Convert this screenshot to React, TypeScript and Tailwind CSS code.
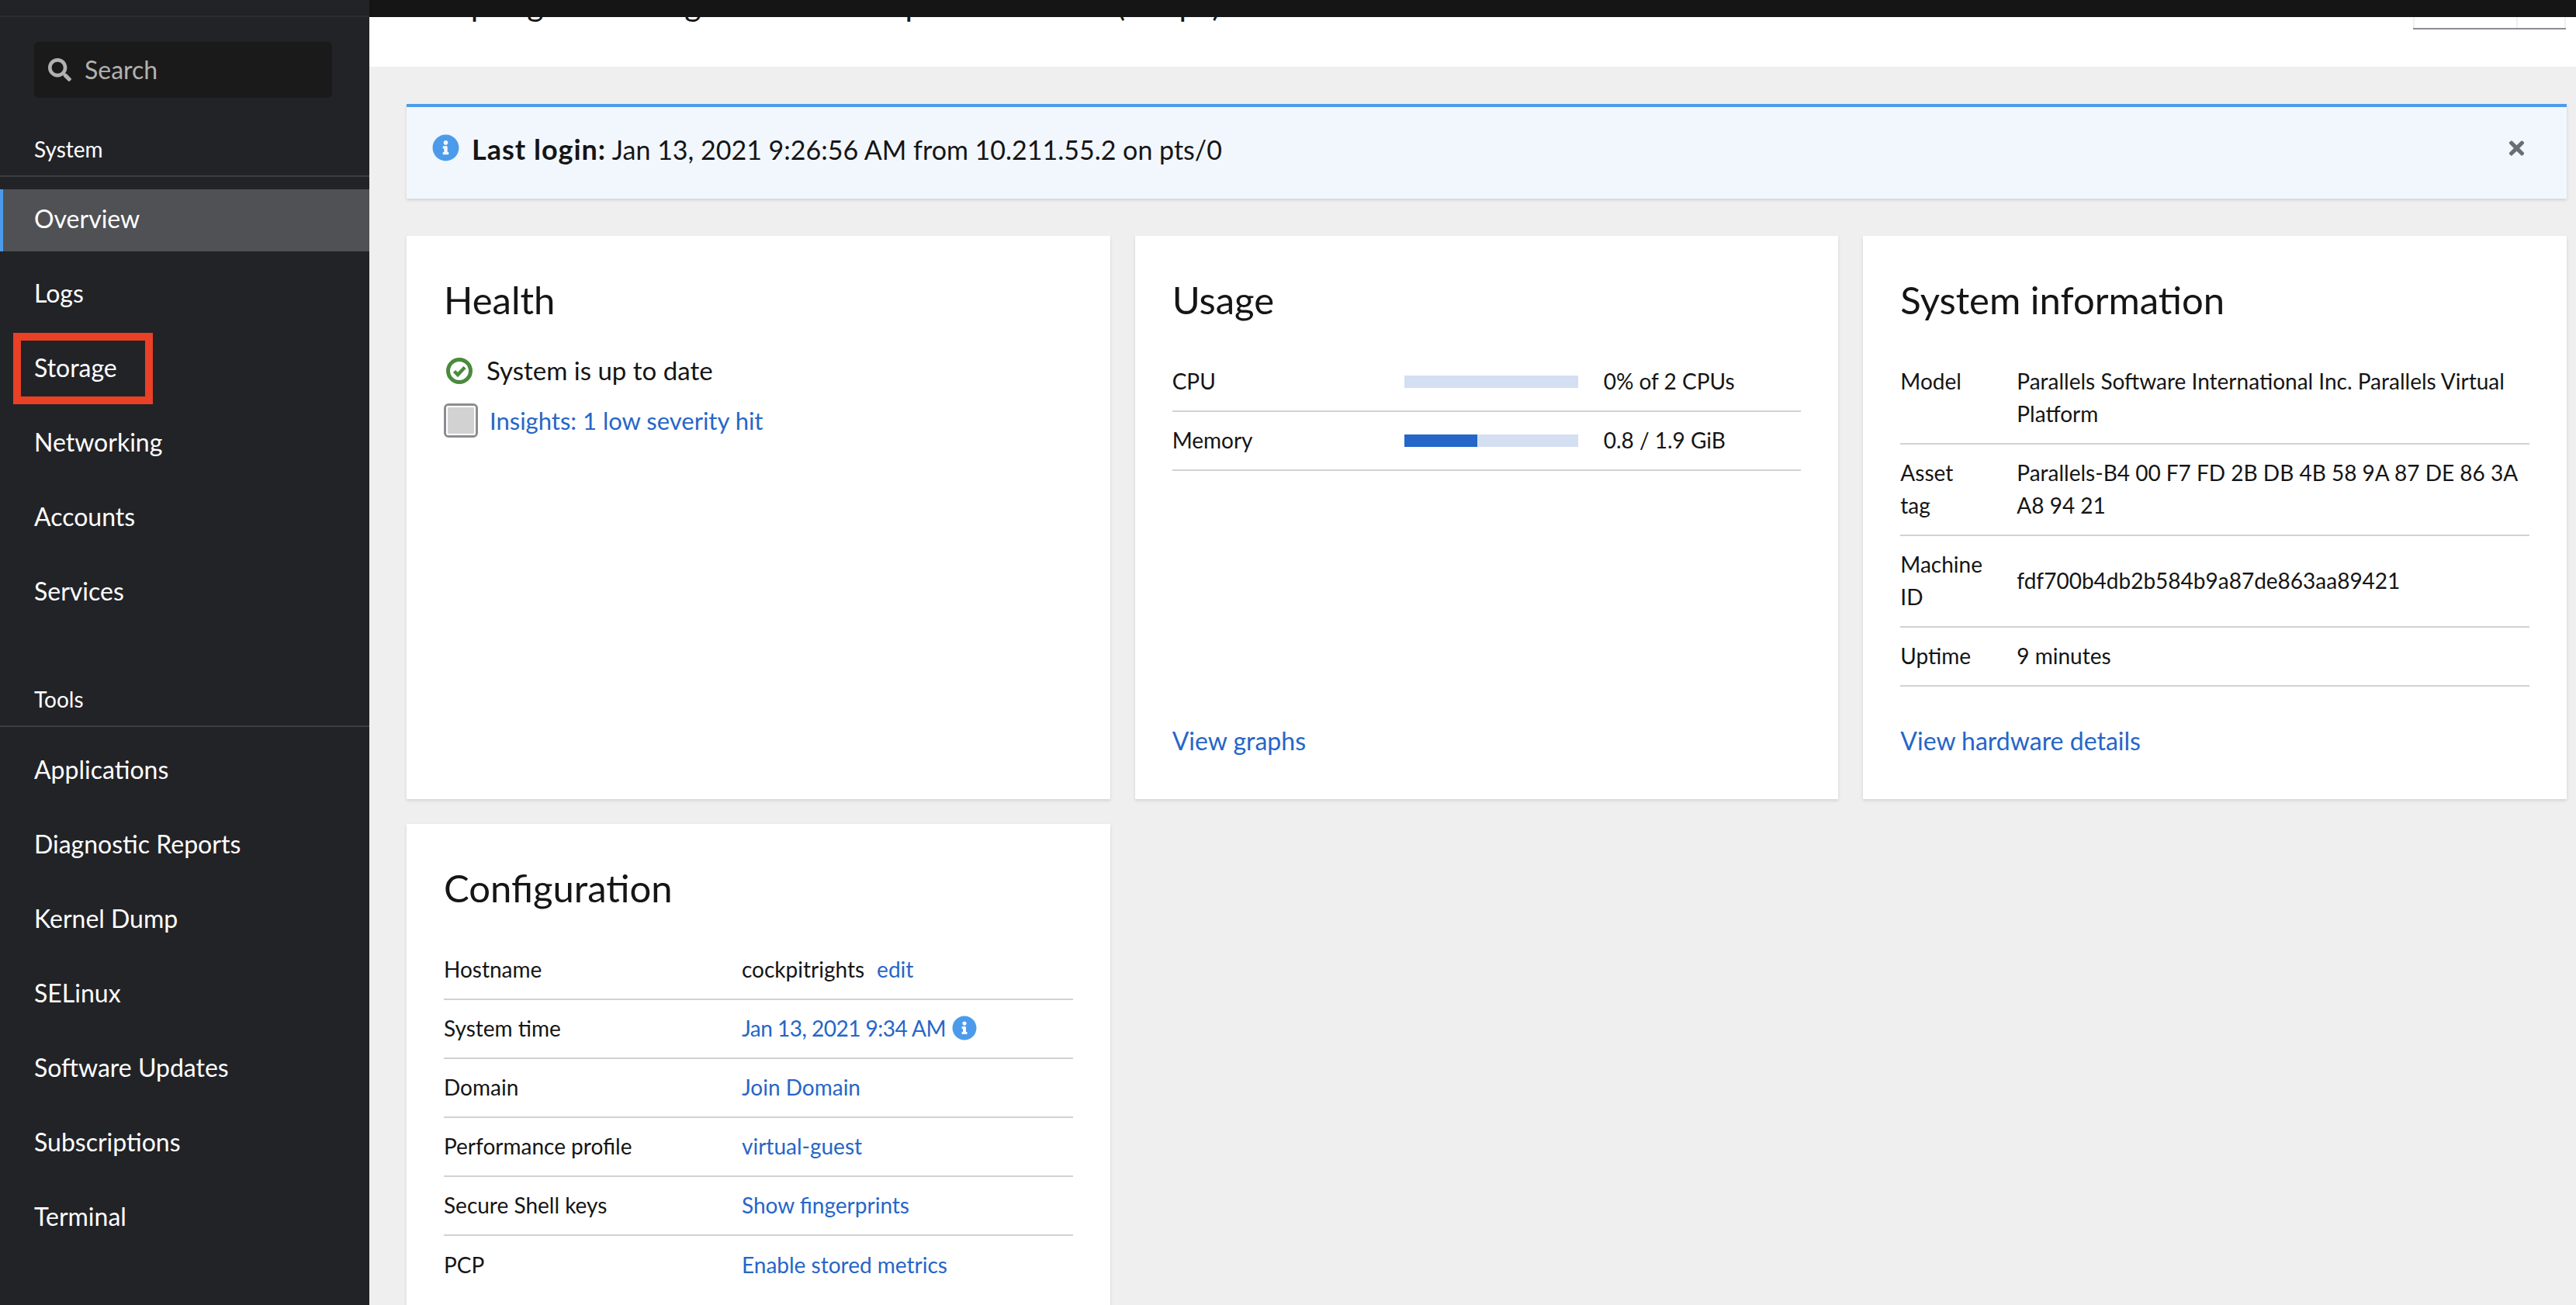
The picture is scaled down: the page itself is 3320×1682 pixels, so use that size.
import { FaInfoCircle, FaSearch, FaTimes } from 'react-icons/fa';

const systemItems = ['Overview', 'Logs', 'Storage', 'Networking', 'Accounts', 'Services'];
const toolItems = ['Applications', 'Diagnostic Reports', 'Kernel Dump', 'SELinux', 'Software Updates', 'Subscriptions', 'Terminal'];

const infoRows = [
    { label: 'Model', value: 'Parallels Software International Inc. Parallels Virtual Platform' },
    { label: 'Asset tag', value: 'Parallels-B4 00 F7 FD 2B DB 4B 58 9A 87 DE 86 3A A8 94 21' },
    { label: 'Machine ID', value: 'fdf700b4db2b584b9a87de863aa89421' },
    { label: 'Uptime', value: '9 minutes' },
];

const configRows = [
    { label: 'System time', value: 'Jan 13, 2021 9:34 AM', info: true },
    { label: 'Domain', value: 'Join Domain' },
    { label: 'Performance profile', value: 'virtual-guest' },
    { label: 'Secure Shell keys', value: 'Show fingerprints' },
    { label: 'PCP', value: 'Enable stored metrics', last: true },
];

function NavItem({ name, active, boxed }: { name: string; active?: boolean; boxed?: boolean }) {
    return (
        <div className={`relative h-[80px] mb-[16px] pb-[4px] flex items-center text-[32px] text-white ${active ? 'bg-[#505155] border-l-4 border-[#4c9beb] pl-[40px]' : 'pl-[44px]'}`}>
            {name}
            {boxed && <div className="absolute left-[17px] top-[-7px] w-[180px] h-[92px] border-[10px] border-[#e94026]" />}
        </div>
    );
}

function SectionLabel({ children }: { children: string }) {
    return <div className="pl-[44px] pb-[13px] border-b-2 border-[#3c3d41] text-[28px] leading-[42px] text-white">{children}</div>;
}

function CheckIcon() {
    return (
        <svg viewBox="0 0 34 34" className="w-[34px] h-[34px] ml-[3px] mr-[18px] shrink-0">
            <circle cx="17" cy="17" r="14.5" fill="none" stroke="#4a8a3c" strokeWidth="5" />
            <path d="M10.5 17.5 L15 22 L24 12.5" fill="none" stroke="#4a8a3c" strokeWidth="4.5" />
        </svg>
    );
}

function Sidebar() {
    return (
        <div className="w-[476px] shrink-0 bg-[#222327] h-full overflow-hidden">
            <div className="h-[22px] border-b-2 border-[#2b2c2e] overflow-hidden pl-[44px]">
                <div className="text-[32px] leading-[42px] text-white mt-[-39px]">cockpitrights</div>
            </div>
            <div className="mx-[44px] mt-[32px] h-[72px] w-[384px] bg-[#1a1a1a] rounded-[6px] flex items-center pl-[18px] text-[32px] text-[#b1b1b1]">
                <FaSearch className="w-[30px] h-[30px] mr-[17px]" />
                Search
            </div>
            <div className="mt-[45px] mb-[16px]">
                <SectionLabel>System</SectionLabel>
            </div>
            {systemItems.map((item) => (
                <NavItem key={item} name={item} active={item === 'Overview'} boxed={item === 'Storage'} />
            ))}
            <div className="mt-[76px] mb-[17px]">
                <SectionLabel>Tools</SectionLabel>
            </div>
            {toolItems.map((item) => (
                <NavItem key={item} name={item} />
            ))}
        </div>
    );
}

function Card({ title, children, className }: { title: string; children: React.ReactNode; className?: string }) {
    return (
        <div className={`bg-white px-[48px] pt-[48px] shadow-[0_2px_4px_rgba(3,3,3,0.12)] flex flex-col ${className ?? ''}`}>
            <h2 className="text-[49px] leading-[68px] mb-[35px] text-[#151515]">{title}</h2>
            {children}
        </div>
    );
}

function UsageRow({ label, value, percent }: { label: string; value: string; percent: number }) {
    return (
        <div className="flex items-center h-[76px] border-b-2 border-[#d2d2d2] text-[28px] text-[#151515]">
            <div className="w-[299px] pb-[2px]">{label}</div>
            <div className="w-[224px] h-[16px] bg-[#d5dff2]">
                <div className="h-full bg-[#2566c8]" style={{ width: `${percent}%` }} />
            </div>
            <div className="ml-[33px] pb-[2px]">{value}</div>
        </div>
    );
}

export default function App() {
    return (
        <div className="flex w-[3320px] h-[1682px] overflow-hidden text-[#151515] font-['Lato','Noto_Sans',sans-serif]">
            <Sidebar />
            <div className="flex-1 min-w-0 flex flex-col bg-[#efefef]">
                <div className="h-[22px] bg-[#151515] relative z-10 shrink-0" />
                <div className="h-[64px] shrink-0 bg-white flex justify-between pl-[48px] pr-[13px] overflow-hidden">
                    <div className="text-[41px] leading-[56px] mt-[-44px]">cockpitrights running Red Hat Enterprise Linux 8.3 (Ootpa)</div>
                    <div className="w-[197px] h-[16px] flex border-b-2 border-[#8a8d90]">
                        <div className="w-[135px] border-x-2 border-[#f0f0f0]" />
                        <div className="flex-1 border-r-2 border-[#f0f0f0]" />
                    </div>
                </div>
                <div className="pl-[48px] pr-[12px] pt-[48px]">
                    <div className="h-[122px] bg-[#f2f7fe] border-t-4 border-[#4c9beb] shadow-[0_2px_4px_rgba(3,3,3,0.12)] flex items-start pl-[33px] pr-[53px] pt-[35px]">
                        <FaInfoCircle className="w-[35px] h-[35px] text-[#4c9beb] mr-[16px]" />
                        <div className="text-[34px] leading-[40px] mt-[-1px]">
                            <b className="font-bold text-[36px] tracking-[1px]">Last login:</b> Jan 13, 2021 9:26:56 AM from 10.211.55.2 on pts/0
                        </div>
                        <FaTimes className="ml-auto mt-[4px] w-[23px] h-[28px] text-[#6a6e73]" />
                    </div>
                    <div className="grid grid-cols-3 gap-[32px] mt-[48px] grid-rows-[726px_auto]">
                        <Card title="Health">
                            <div className="flex items-center h-[42px] mt-[2px] text-[33px]">
                                <CheckIcon />
                                System is up to date
                            </div>
                            <div className="flex items-center h-[44px] mt-[21px] text-[31px] text-[#2566c8]">
                                <div className="w-[44px] h-[44px] mr-[15px] rounded-[6px] border-[3px] border-[#8a8d90] bg-[#d2d2d2] outline-2 outline-white outline-offset-[-5px]" />
                                Insights: 1 low severity hit
                            </div>
                        </Card>
                        <Card title="Usage">
                            <UsageRow label="CPU" value="0% of 2 CPUs" percent={0} />
                            <UsageRow label="Memory" value="0.8 / 1.9 GiB" percent={42} />
                            <a className="mt-auto mb-[54px] text-[32px] leading-[42px] text-[#2566c8]">View graphs</a>
                        </Card>
                        <Card title="System information">
                            {infoRows.map((row) => (
                                <div key={row.label} className="flex items-center pt-[15px] pb-[17px] border-b-2 border-[#d2d2d2] text-[28px] leading-[42px]">
                                    <div className="w-[150px] shrink-0 pr-[42px] self-start">{row.label}</div>
                                    <div>{row.value}</div>
                                </div>
                            ))}
                            <a className="mt-auto mb-[54px] text-[32px] leading-[42px] text-[#2566c8]">View hardware details</a>
                        </Card>
                        <Card title="Configuration" className="h-[700px]">
                            <div className="flex items-center h-[76px] pb-[2px] border-b-2 border-[#d2d2d2] text-[28px]">
                                <div className="w-[384px]">Hostname</div>
                                <div>cockpitrights</div>
                                <a className="ml-[16px] text-[#2566c8]">edit</a>
                            </div>
                            {configRows.map((row) => (
                                <div key={row.label} className={`flex items-center h-[76px] pb-[2px] text-[28px] ${row.last ? '' : 'border-b-2 border-[#d2d2d2]'}`}>
                                    <div className="w-[384px]">{row.label}</div>
                                    <a className={`text-[#2566c8] ${row.info ? 'tracking-[-0.5px]' : ''}`}>{row.value}</a>
                                    {row.info && <FaInfoCircle className="ml-[8px] w-[32px] h-[32px] text-[#4c9beb]" />}
                                </div>
                            ))}
                        </Card>
                    </div>
                </div>
            </div>
        </div>
    );
}
